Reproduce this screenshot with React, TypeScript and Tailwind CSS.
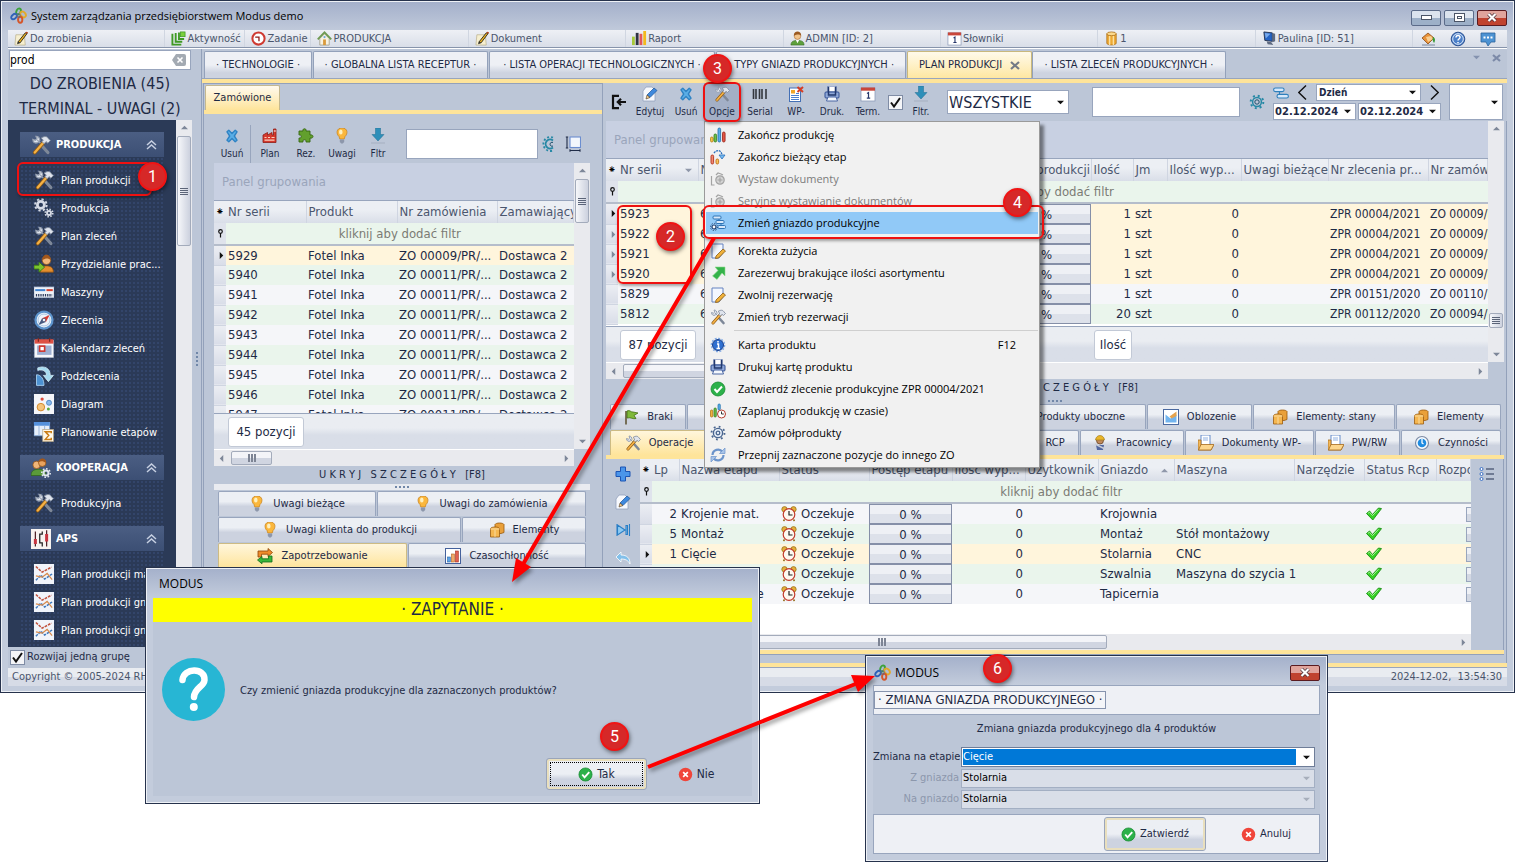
import React from 'react';

const ICONS: Record<string, React.ReactNode> = {
  logo: (
    <g fill="none" strokeWidth="1.8">
      <ellipse cx="8" cy="4.2" rx="2" ry="3" stroke="#3aa23a" transform="rotate(25 8 4.2)" />
      <ellipse cx="12.3" cy="7" rx="2.2" ry="3" stroke="#e2a92a" transform="rotate(-40 12.3 7)" />
      <ellipse cx="3.8" cy="9" rx="2" ry="3" stroke="#2f62b8" transform="rotate(50 3.8 9)" />
      <ellipse cx="9.6" cy="12" rx="2" ry="2.8" stroke="#d5562a" />
      <circle cx="8" cy="8" r="1.6" stroke="#5a6b86" strokeWidth="1" />
    </g>
  ),
  note: (
    <g>
      <path d="M2 4h9l1 11H1z" fill="#f6efd0" stroke="#b5ab86" strokeWidth=".7" />
      <path d="M4 12 12 2l2 .6L6.500 12.600z" fill="#f0b51c" stroke="#2c2a22" strokeWidth="1" />
      <path d="M12 1.800 13 .8l2 .6-1 1.600z" fill="#b8431d" />
      <path d="m4 12-.8 2 3-1z" fill="#222" />
    </g>
  ),
  stack: (
    <g fill="none" stroke="#3f9a24" strokeWidth="2">
      <path d="M1.500 3v11.500H11M5 2v9.500h7M8.500 1.500v7H14" />
      <rect x="10" y="1" width="5" height="5" fill="#7bcf3d" stroke="#3f9a24" strokeWidth=".8" />
    </g>
  ),
  clockRed: (
    <g>
      <circle cx="8" cy="8" r="6.500" fill="#fff" stroke="#cf3a31" strokeWidth="2.200" />
      <path d="M4.500 6.500H8.500V11" fill="none" stroke="#8d1d18" strokeWidth="1.400" />
    </g>
  ),
  house: (
    <g>
      <path d="M3 8v7h10V8L8 3z" fill="#f7f2e2" stroke="#9b9782" strokeWidth=".8" />
      <path d="M.8 9 8 1.500 15.200 9" fill="none" stroke="#6f9a52" strokeWidth="2" />
      <rect x="6.500" y="9" width="3" height="6" fill="#d99a3c" />
      <circle cx="8" cy="6.500" r="1.200" fill="#6aa7dc" />
    </g>
  ),
  bars: (
    <g>
      <rect x="0" y="6" width="3" height="9" fill="#a7c93a" />
      <rect x="4" y="2" width="3" height="13" fill="#2f3342" />
      <rect x="8" y="3" width="3" height="12" fill="#e2565a" />
      <rect x="12" y="0" width="3" height="15" fill="#f3b91d" />
    </g>
  ),
  user: (
    <g>
      <path d="M1 15c0-4 3-5 7-5s7 1 7 5z" fill="#5da03c" stroke="#376a20" strokeWidth=".6" />
      <path d="M6 9h4l-2 4z" fill="#fff" />
      <circle cx="8" cy="5.500" r="3.500" fill="#f2c48c" stroke="#a5682e" strokeWidth=".6" />
      <path d="M4 5c0-6 8-6 8 0-2-2-5-1-8 0z" fill="#9b5a22" />
    </g>
  ),
  calendar: (
    <g>
      <rect x="1" y="2" width="14" height="13" fill="#fff" stroke="#8d9bb8" strokeWidth=".8" />
      <rect x="1" y="1.500" width="14" height="3.200" fill="#c9463a" />
      <path d="M7 7.500 8.500 6.500V12M6.800 12.200h3.400" fill="none" stroke="#27376b" strokeWidth="1.200" />
    </g>
  ),
  db: (
    <g>
      <path d="M3 3v10c0 2.500 10 2.500 10 0V3z" fill="#eda934" stroke="#a96a12" strokeWidth=".8" />
      <path d="M6 4v11M10 4v11" stroke="#fbe0a0" strokeWidth="1.500" />
      <ellipse cx="8" cy="3" rx="5" ry="2" fill="#fbd98d" stroke="#a96a12" strokeWidth=".8" />
    </g>
  ),
  monitor: (
    <g>
      <path d="m2 1 9 1v9l-8-1z" fill="#2463c4" stroke="#2a3550" />
      <path d="m11 2 3 1v8l-3 1zM5 11l1 3 6 1-2-3z" fill="#5e6a80" />
      <path d="m3 2 6 1-5 5z" fill="#77a9ec" />
    </g>
  ),
  bucket: (
    <g>
      <path d="M2 7 8 2l6 5-6 6z" fill="#e8923a" stroke="#8a4c17" strokeWidth=".8" />
      <path d="m6 6 5-1 2 3-5 3z" fill="#f9cf91" />
      <path d="M13 6c3 1 2 5 1 6-1-2-2-3-1-6z" fill="#3a9a3a" />
      <path d="M2 14h13" stroke="#9aa4b6" strokeWidth="1.500" />
    </g>
  ),
  help: (
    <g>
      <circle cx="8" cy="8" r="6.800" fill="#4c80c9" stroke="#2c5191" />
      <circle cx="8" cy="8" r="5.300" fill="none" stroke="#dbe7f8" />
      <path d="M6 6.500c0-3 4.300-2.500 4 0C9.800 8 8 8 8 9.500M8 11v1.200" fill="none" stroke="#fff" strokeWidth="1.500" />
    </g>
  ),
  chat: (
    <g>
      <path d="M1 2h14v9h-4l-3 4-2-4H1z" fill="#4d93d3" stroke="#2b639c" strokeWidth=".8" />
      <path d="M3.500 6.500h2M7 6.500h2M10.500 6.500h2" stroke="#fff" strokeWidth="2" />
    </g>
  ),
  tools: (
    <g>
      <path d="m9 9 4.500 5" stroke="#7e8898" strokeWidth="2.600" strokeLinecap="round" />
      <path d="M9.500 8.500 5 4M1.500 3.500c0 2.500 2 3.500 4 2.500L7 4.500C7 2.500 6 1 4 1l.8 2L3.500 4.200z" fill="#dfe4ed" stroke="#97a1b2" strokeWidth="1" />
      <path d="M3 14 10 6" stroke="#8f5a15" strokeWidth="3" strokeLinecap="round" />
      <path d="M3 14 10 6" stroke="#f5b245" strokeWidth="1.800" strokeLinecap="round" />
      <path d="M8 2.500c3-2 5-1.500 6 .5l1.500 1.500-2 2-1.500-1.200L10.500 7 8.800 5.300l1-1.300z" fill="#dfe4ed" stroke="#7d889b" strokeWidth=".8" />
    </g>
  ),
  gears: (
    <g fill="none" stroke="#d6dbe6">
      <circle cx="5.500" cy="5.500" r="2.800" strokeWidth="2.200" />
      <circle cx="5.500" cy="5.500" r="4.600" strokeWidth="1.600" strokeDasharray="1.800 1.800" />
      <circle cx="12" cy="12" r="1.600" strokeWidth="1.500" />
      <circle cx="12" cy="12" r="3" strokeWidth="1.300" strokeDasharray="1.200 1.150" />
    </g>
  ),
  assign: (
    <g>
      <path d="M5 14.500c0-4 2-5 5-5s5.500 1 5.500 5z" fill="#e48e2f" stroke="#8f4f12" strokeWidth=".6" />
      <circle cx="10" cy="5" r="3.400" fill="#f0b679" stroke="#8f4f12" strokeWidth=".6" />
      <path d="M6.500 5c0-6 7-6 7 0-2-2-4-2-7 0z" fill="#a2571c" />
      <path d="M0 9h4V6.500L8.500 10.500 4 14.500V12H0z" fill="#7cc530" stroke="#3f7d12" strokeWidth=".7" />
    </g>
  ),
  ruler: (
    <g>
      <rect x="0" y="4" width="16" height="8.500" fill="#eef2f9" stroke="#aebbd2" strokeWidth=".6" />
      <path d="M1 6.500h8" stroke="#3f83d0" strokeWidth="1.600" />
      <path d="M10 6.500h5" stroke="#d8402f" strokeWidth="1.600" />
      <path d="M1.500 10.500h13" stroke="#2c3a5c" strokeWidth="2" strokeDasharray="1 .8" />
    </g>
  ),
  compass: (
    <g>
      <circle cx="8" cy="8" r="6.800" fill="#eef4fb" stroke="#5d94cc" strokeWidth="1.800" />
      <circle cx="8" cy="8" r="4.800" fill="none" stroke="#a9c5e2" strokeWidth=".8" />
      <path d="m3.500 12 3-5.500 3 3z" fill="#46597f" />
      <path d="m12.500 4-3 5.500-3-3z" fill="#d83a30" />
      <circle cx="8" cy="8" r="1.300" fill="#fff" stroke="#46597f" strokeWidth=".6" />
    </g>
  ),
  calendarRed: (
    <g>
      <rect x=".5" y="2" width="15" height="13.500" fill="#f5f7fb" stroke="#b8c1d2" strokeWidth=".6" />
      <rect x=".5" y="1" width="15" height="3.500" fill="#dd5145" />
      <rect x="2.500" y="6" width="11.500" height="7.500" fill="#9eb0d2" />
      <rect x="4.500" y="6.500" width="4" height="4" fill="#fff" stroke="#d0342b" strokeWidth="1.300" />
      <path d="M3.500 0v3M12.500 0v3" stroke="#7d2a22" strokeWidth="1" />
    </g>
  ),
  sub: (
    <g>
      <path d="M2 7c4 0 6 4 6 8.500H2z" fill="#4d92d2" stroke="#a9d1f0" strokeWidth=".7" />
      <path d="M3 1.500c5-2 10 0 10 6h2.500l-4 5-4-5H10C10 4 7 2.500 3 3.500z" fill="#a7dbf0" stroke="#d9f2fb" strokeWidth=".6" />
    </g>
  ),
  diagram: (
    <g>
      <rect width="16" height="16" fill="#f5f6fa" />
      <circle cx="5.500" cy="10.500" r="3" fill="#f6c57d" stroke="#d48a2c" strokeWidth=".8" />
      <circle cx="12" cy="7" r="2" fill="#8bbbec" stroke="#4c83c2" strokeWidth=".7" />
      <circle cx="6.500" cy="4" r="1.300" fill="#dc4c3d" />
      <circle cx="11.500" cy="12" r="1.200" fill="#5eaa3d" />
    </g>
  ),
  sigma: (
    <g>
      <rect x="0" y="0" width="12.500" height="11" fill="#e7effa" stroke="#7ea4d4" strokeWidth=".7" />
      <rect x="0" y="0" width="12.500" height="3" fill="#5591dc" />
      <path d="M4 3v8M8.500 3v8" stroke="#9bb7dc" strokeWidth=".8" />
      <rect x="7" y="6" width="8.500" height="9.500" fill="#fff8ea" stroke="#b9a98a" strokeWidth=".6" />
      <path d="M13.800 9V7.700H9l2.800 3L9 13.900h4.800v-1.300" fill="none" stroke="#cb7d16" strokeWidth="1.200" />
    </g>
  ),
  coop: (
    <g>
      <path d="M0 14c0-4 3-5 6-5s6 1 6 5z" fill="#5b9b3a" stroke="#32651b" strokeWidth=".6" />
      <circle cx="4.500" cy="5.500" r="3" fill="#f0b679" stroke="#8f4f12" strokeWidth=".6" />
      <circle cx="9" cy="3.800" r="3" fill="#e8a35f" stroke="#8f4f12" strokeWidth=".6" />
      <path d="M6 3.500c1-4.500 6-4 6 .5-2-1.500-4-2-6-.5z" fill="#a2571c" />
      <circle cx="12" cy="12" r="2" fill="none" stroke="#dfe5ee" strokeWidth="1.600" />
      <circle cx="12" cy="12" r="3.400" fill="none" stroke="#dfe5ee" strokeWidth="1.200" strokeDasharray="1.300 1.300" />
    </g>
  ),
  aps: (
    <g>
      <rect width="16" height="16" fill="#f8f3f0" />
      <path d="M3.500 2v12M12.500 1v13" stroke="#51242a" strokeWidth="1" />
      <rect x="2.300" y="8" width="2.400" height="4" fill="#c73540" />
      <path d="M9 2v2H7v7h2v3" fill="none" stroke="#222" strokeWidth="1" />
      <rect x="11.300" y="4" width="2.400" height="6" fill="#c73540" />
    </g>
  ),
  lines: (
    <g>
      <rect width="16" height="16" fill="#f1f4fa" />
      <path d="m1.500 2 5 4.500L14 2.500" fill="none" stroke="#c0523d" strokeWidth="1.200" strokeDasharray="2.200 .8" />
      <path d="m1.500 13 4-4 3 3 6-4" fill="none" stroke="#3f79bd" strokeWidth="1.200" strokeDasharray="2.200 .8" />
      <path d="m1.500 9.500 5 1 4-3 4 5" fill="none" stroke="#d78a4c" strokeWidth="1" />
    </g>
  ),
  cross: <path d="M3 3.800 4.800 2.200 8 5.400l3.200-3.200L13 3.800 10.300 8l2.700 4.200-1.800 1.600L8 10.600l-3.200 3.200L3 12.200 5.700 8z" fill="#5aaee6" stroke="#2f83c4" strokeWidth="1.400" strokeLinejoin="round" />,
  factory: (
    <g>
      <path d="M1 7 5.500 4.500V7L10 4.500V7h1.500V1H14v13.500H1z" fill="#d63a2e" stroke="#8e1d15" strokeWidth=".8" />
      <path d="M2.500 9.500h2M6 9.500h2M9.500 9.500h3M2.500 12.200h10" stroke="#fbd0bb" strokeWidth="1.200" />
      <path d="M11.800 3h2" stroke="#fff" />
    </g>
  ),
  puzzle: <path d="M1 3h4c-1-3 4-3 3 0h4v4c4-1 4 4 0 3v4H8c1-3-4-3-3 0H1v-4c3 1 3-4 0-3z" fill="#62a02d" stroke="#376812" strokeWidth=".9" />,
  bulb: (
    <g>
      <path d="M8 0c-6 0-6 6-3 8.500L5.800 11h4.400L11 8.500C14 6 14 0 8 0z" fill="#fbb73c" stroke="#c6801a" strokeWidth=".7" />
      <ellipse cx="6.800" cy="4" rx="1.800" ry="2.500" fill="#fff0bd" />
      <path d="M5.800 11.500h4.400v2.500L8.800 15.500H7.200L5.800 14z" fill="#8d97ab" />
    </g>
  ),
  down: (
    <g>
      <path d="M5.500 0h5v6.500H14L8 13 2 6.500h3.500z" fill="#2e8fb9" stroke="#1f6c92" strokeWidth=".5" />
      <path d="M1 15h14" stroke="#a5afc0" />
    </g>
  ),
  gearTeal: (
    <g fill="none" stroke="#2688a5">
      <circle cx="8" cy="8" r="4.400" strokeWidth="1.500" />
      <circle cx="8" cy="8" r="6.300" strokeWidth="2" strokeDasharray="2 2.950" />
      <circle cx="8" cy="8" r="2.200" stroke="#1c4f6c" strokeWidth="1" />
    </g>
  ),
  gearHalf: (
    <g fill="none" stroke="#2688a5">
      <path d="M12 4.500a4.500 4.500 0 1 0 0 7" strokeWidth="1.800" />
      <path d="M12 1.500a7 7 0 1 0 0 13" strokeWidth="1.800" strokeDasharray="2 2" />
      <path d="M12 6.500a2 2 0 1 0 0 3.500" stroke="#1c4f6c" />
    </g>
  ),
  resize: (
    <g fill="none" stroke="#202c47" strokeWidth="1.100">
      <rect x="5" y="1" width="10.500" height="10.500" fill="#f3f7fd" stroke="#6c8ed0" />
      <path d="M2 1v11M.8 1h2.400M.8 12h2.400M5 14.500h10M5 13.300v2.400M15 13.300v2.400" />
    </g>
  ),
  exit: <path d="M8 1.800H2v12.400h6M15 8H7M10 4.800 6.800 8l3.200 3.200" fill="none" stroke="#111" strokeWidth="2.200" />,
  edit: (
    <g>
      <path d="M4 1h6l3 3v11H1V5z" fill="#f7f9fd" stroke="#93a1bc" strokeWidth=".8" />
      <path d="m5 9 7-7 3 2.500-7 7z" fill="#3f89dd" stroke="#1d5398" strokeWidth=".7" />
      <path d="m5 9 3 2.500L4 13z" fill="#f1c98b" stroke="#4b3a25" strokeWidth=".6" />
    </g>
  ),
  barcode: <path d="M1.500 3v10M4 3v10M7.500 3v10M10 3v10M14 3v10" stroke="#33373f" strokeWidth="1.600" />,
  wp: (
    <g>
      <rect x="1.500" y="2" width="11" height="13.500" fill="#fff" stroke="#4470b5" />
      <rect x="3" y="4" width="4" height="3.500" fill="#f0a52a" />
      <path d="M3 9.500h8M3 11.500h8M3 13.500h8M8 7.500h3" stroke="#4c7fd0" />
      <path d="m9.500 1 5.500 5M15 1 9.500 6" stroke="#d63d23" strokeWidth="2" />
    </g>
  ),
  printer: (
    <g>
      <rect x="4" y="0" width="8" height="6" fill="#fff" stroke="#4a66a3" />
      <rect x="1" y="6" width="14" height="6" rx="1" fill="#8fa8d8" stroke="#304f93" />
      <path d="M4.500 1v8h7V1" fill="none" stroke="#22386e" strokeWidth="1.500" />
      <path d="M4 11h8l1.500 4h-11z" fill="#f3f7fd" stroke="#4a66a3" />
    </g>
  ),
  pills: (
    <g fill="#d7e8fa" stroke="#2f80bd" strokeWidth="1.100">
      <rect x=".6" y="3" width="10.500" height="3.600" rx="1.800" />
      <path d="M6.500 6.600v2.800" />
      <rect x="4" y="9.400" width="11.400" height="3.600" rx="1.800" />
    </g>
  ),
  barsColor: (
    <g strokeWidth=".8">
      <rect x=".5" y="10" width="2.600" height="5" rx="1.300" fill="#f5c34a" stroke="#b07b10" />
      <rect x="4" y="7" width="2.600" height="8" rx="1.300" fill="#6cc04a" stroke="#32791a" />
      <rect x="8" y="1" width="2.600" height="14" rx="1.300" fill="#57aee8" stroke="#1f6dab" />
      <rect x="12.500" y="5" width="2.600" height="10" rx="1.300" fill="#e05545" stroke="#98251b" />
    </g>
  ),
  stage: (
    <g>
      <rect x="1" y="6" width="2.600" height="9" rx="1.300" fill="#f08a70" stroke="#b0301f" strokeWidth=".9" />
      <rect x="6" y="10" width="2.600" height="5" rx="1.300" fill="#f7c860" stroke="#c26a14" strokeWidth=".9" />
      <path d="M4 4c3-4 8-3 8 3" fill="none" stroke="#2a6fbd" strokeWidth="1.400" strokeDasharray="2 .8" />
      <path d="M9 6h6l-3 4z" fill="#78bdf0" stroke="#2a6fbd" strokeWidth=".8" />
    </g>
  ),
  grayDoc: (
    <g fill="none" stroke="#a3a3a3" strokeWidth="1.200">
      <path d="M1.500 5v9h3" />
      <circle cx="10" cy="9" r="4.200" fill="#d4d4d4" />
      <path d="M10 6.500v5M7.500 9h5M6 4l2-2 3 1 2 1" />
    </g>
  ),
  change: (
    <g>
      <g fill="#d7e8fa" stroke="#2f74b5" strokeWidth="1">
        <rect x="3" y="1" width="8" height="3" rx="1" />
        <path d="M9 4v1.500" />
        <rect x="6" y="5.500" width="8" height="3" rx="1" />
        <path d="M11 8.500v2" />
        <rect x="8" y="10.500" width="7.500" height="3" rx="1" />
      </g>
      <circle cx="4" cy="12" r="2" fill="#fff" stroke="#23416f" strokeWidth="1.200" />
      <circle cx="4" cy="12" r="3.600" fill="none" stroke="#23416f" strokeWidth="1" strokeDasharray="1.200 1.600" />
    </g>
  ),
  notePencil: (
    <g>
      <path d="M2 1h11v9l-4 5H2z" fill="#f3f7fe" stroke="#6582c0" />
      <path d="m6 13 7-7 2.500 2-7 7-3 .5z" fill="#f0b13a" stroke="#8a5a10" strokeWidth=".8" />
    </g>
  ),
  greenArrow: <path d="M5 2h10v9l-3-3-5 6.500L2.500 11 8 5.500z" fill="#34b24a" stroke="#8edb8c" strokeWidth=".6" />,
  info: (
    <g>
      <circle cx="8" cy="8" r="5.500" fill="#2f6fd0" stroke="#173f8c" strokeWidth="1" />
      <circle cx="8" cy="8" r="6.700" fill="none" stroke="#7fa9e5" strokeWidth="1.200" strokeDasharray="2 1.500" />
      <path d="M8 4v1.500M7 7h1.500v4M6.500 11.500h3.500" fill="none" stroke="#fff" strokeWidth="1.500" />
    </g>
  ),
  ok: (
    <g>
      <circle cx="8" cy="8" r="7" fill="#2cb14a" stroke="#168a30" strokeWidth=".8" />
      <path d="m4.500 8 2.500 3 5-5.500" fill="none" stroke="#fff" strokeWidth="2" />
    </g>
  ),
  no: (
    <g>
      <circle cx="8" cy="8" r="7.200" fill="#f0453a" />
      <path d="m5.500 5.500 5 5m0-5-5 5" stroke="#fff" strokeWidth="1.800" />
    </g>
  ),
  barsClock: (
    <g>
      <rect x=".5" y="7" width="2.300" height="7" rx="1" fill="#f1b33f" stroke="#a86c0d" strokeWidth=".7" />
      <rect x="4" y="5" width="2.300" height="9" rx="1" fill="#69bb47" stroke="#32791a" strokeWidth=".7" />
      <rect x="8" y="1" width="2.300" height="6" rx="1" fill="#57aee8" stroke="#1f6dab" strokeWidth=".7" />
      <circle cx="11.500" cy="11" r="4" fill="#fff" stroke="#b3392c" />
      <path d="M11.500 8.500V11h2.300" fill="none" stroke="#333" />
    </g>
  ),
  gearBlue: (
    <g fill="none" stroke="#49658f">
      <circle cx="8" cy="8" r="4.600" strokeWidth="1.400" fill="#e8eff9" />
      <circle cx="8" cy="8" r="6.500" strokeWidth="1.800" strokeDasharray="1.800 3.300" />
      <circle cx="8" cy="8" r="1.800" strokeWidth="1.300" />
    </g>
  ),
  refresh: (
    <g fill="none" stroke="#6c94cb" strokeWidth="2.200">
      <path d="M2.500 8a5.500 5.500 0 0 1 10-3M13.500 8a5.500 5.500 0 0 1-10 3" />
      <path d="M15 1v5.500H9.500zM1 15V9.500h5.500z" fill="#a9c4e8" strokeWidth=".7" />
    </g>
  ),
  flag: (
    <g>
      <path d="M3 2v13.500" stroke="#594c2a" strokeWidth="1.500" />
      <path d="M4 2c3-1.500 4 1.500 6 1l5 1-4 2.500 2 3c-3 1-5-1.500-9-.5z" fill="#7fb93a" stroke="#436f13" strokeWidth=".8" />
    </g>
  ),
  load: (
    <g>
      <rect x=".5" y=".5" width="15" height="15" fill="#fff" stroke="#49689f" />
      <path d="M2.500 13.500v-8l5 4 6-4v8z" fill="#72b4ee" />
      <path d="m6.500 7.500 7-5v4.500l-5 2.500z" fill="#e6a34d" />
    </g>
  ),
  boxes: (
    <g fill="#e9a03a" stroke="#9a5a0e" strokeWidth=".8">
      <path d="M6 2.500c1-2 8-2 9 0v8l-3 1H6z" />
      <path d="M1.500 6.500c1-2 8-2 9 0V15h-9z" fill="#f5b751" />
      <path d="M1.500 7h9M6 8v7" stroke="#fde6b4" />
    </g>
  ),
  worker: (
    <g>
      <circle cx="8" cy="5.500" r="3.500" fill="#c08a5c" stroke="#5f3a1c" strokeWidth=".7" />
      <path d="M3.500 5C4-1 12-1 12.500 5z" fill="#e9b52a" stroke="#99700c" strokeWidth=".6" />
      <path d="M4 10h8l-1 5H5z" fill="#5267a0" />
      <path d="m3 9 10 5" stroke="#c9ced9" strokeWidth="1.500" />
    </g>
  ),
  folder: (
    <g>
      <rect x="3" y="0" width="9" height="11" fill="#fff" stroke="#5780c4" strokeWidth=".9" />
      <path d="M5 3h5M5 5h5" stroke="#8fb0e2" />
      <path d="M0 5h3v6h12l-2 4H0z" fill="#f3b95b" stroke="#a56a1c" strokeWidth=".8" />
      <path d="M3 9.500h13l-3 5.500H.5z" fill="#fcd68d" stroke="#a56a1c" strokeWidth=".8" />
    </g>
  ),
  clockBlue: (
    <g>
      <circle cx="8" cy="8" r="6.500" fill="#f7fafd" stroke="#7c8ba5" strokeWidth="1.200" />
      <circle cx="8" cy="8" r="4.300" fill="#1f8be0" />
      <path d="M8 4v4l1.500 1" fill="none" stroke="#fff" strokeWidth="1.300" />
    </g>
  ),
  plus: <path d="M5.500 1h5v4.500H15v5h-4.500V15h-5v-4.500H1v-5h4.500z" fill="#4a95ea" stroke="#1c55b4" strokeWidth="1" />,
  skip: <path d="M2 2v12M2.500 3l7.500 5-7.500 5zM11 3.500h1.500v9H11zM14.500 2v12" fill="#8ccaf2" stroke="#2a7fc6" strokeWidth="1.100" />,
  undo: <path d="M1 7 6 2v3c6 0 9 3 9 9-2-4-5-5-9-5v3z" fill="#83c0ea" stroke="#fff" strokeWidth=".8" />,
  alarm: (
    <g>
      <circle cx="3.500" cy="3.300" r="2.700" fill="#e2b13c" stroke="#936913" strokeWidth=".7" />
      <circle cx="12.500" cy="3.300" r="2.700" fill="#e2b13c" stroke="#936913" strokeWidth=".7" />
      <circle cx="8" cy="8.500" r="5.800" fill="#fdf9f0" stroke="#c23a2c" strokeWidth="1.200" />
      <path d="M8 5v4h3.500" fill="none" stroke="#222" strokeWidth="1.200" />
      <path d="m3.500 13.500-1 1.500M12.500 13.500l1 1.500" stroke="#936913" strokeWidth="1.500" />
    </g>
  ),
  tick: (
    <g>
      <path d="M.5 7.500 3.500 5l3 3.500L12.500 2l3 .6L6.800 14z" fill="#35d024" stroke="#1b8f14" strokeWidth=".9" />
      <path d="m2 7.300 1.500-1 3 3.200 6-6.200" fill="none" stroke="#a9f29c" strokeWidth="1" />
    </g>
  ),
  list: (
    <g>
      <path d="M7 3h8M7 8h8M7 13h8" stroke="#223052" strokeWidth="1.200" />
      <g fill="#fff" stroke="#3a6fc4">
        <circle cx="2.500" cy="3" r="1.500" />
        <circle cx="2.500" cy="8" r="1.500" />
        <circle cx="2.500" cy="13" r="1.500" />
      </g>
    </g>
  ),
  exchange: (
    <g>
      <path d="M1 9V3h10V.5l4.500 4L11 8.500V6.200H4.500V9z" fill="#ef8c2b" stroke="#8d4309" strokeWidth=".8" />
      <path d="M15 8v6H5v1.800L.5 12 5 8.500v2.300h6.500V8z" fill="#37b53a" stroke="#126b16" strokeWidth=".8" />
    </g>
  ),
  chart3: (
    <g>
      <rect x=".5" y=".5" width="15" height="15" fill="#fff" stroke="#44619c" />
      <rect x="2.500" y="9" width="2.800" height="5" fill="#5da3e6" stroke="#2a66a8" strokeWidth=".6" />
      <rect x="6.500" y="6" width="2.800" height="8" fill="#f0a868" stroke="#b1611b" strokeWidth=".6" />
      <rect x="10.500" y="3" width="2.800" height="11" fill="#e2604e" stroke="#a32a1b" strokeWidth=".6" />
    </g>
  ),
};

const Icon: React.FC<{ name: string; size?: number }> = ({ name, size = 16 }) => (
  <svg width={size} height={size} viewBox="0 0 16 16" className="shrink-0" aria-hidden="true">
    {ICONS[name]}
  </svg>
);

const Caret: React.FC<{ dir?: 'up' | 'down' | 'left' | 'right'; color?: string }> = ({ dir = 'down', color = '#7d8799' }) => {
  const paths = { up: 'M0 6h8L4 2z', down: 'M0 2h8L4 6z', left: 'M6 0v8L2 4z', right: 'M2 0v8l4-4z' };
  return (
    <svg width="7" height="7" viewBox="0 0 8 8" className="shrink-0" aria-hidden="true">
      <path d={paths[dir]} fill={color} />
    </svg>
  );
};

const Dots: React.FC = () => (
  <div className="flex gap-[2px]">
    {[0, 1, 2, 3].map((i) => (
      <span key={i} className="h-[2px] w-[2px] bg-[#7187a8]" />
    ))}
  </div>
);

const VScroll: React.FC<{ top: string; thumb: string }> = ({ top, thumb }) => (
  <div className="flex w-4 shrink-0 flex-col items-center justify-between bg-[#e9eaee] py-1">
    <Caret dir="up" />
    <div className={`flex w-full flex-1 flex-col px-px ${top}`}>
      <div className={`flex flex-col items-center justify-center gap-px rounded-[2px] border border-[#a3abbb] bg-gradient-to-r from-[#f6f7fa] to-[#ccd1de] ${thumb}`}>
        <span className="h-px w-2 bg-[#5b6478]" />
        <span className="h-px w-2 bg-[#5b6478]" />
        <span className="h-px w-2 bg-[#5b6478]" />
        <span className="h-px w-2 bg-[#5b6478]" />
      </div>
    </div>
    <Caret dir="down" />
  </div>
);

const HScroll: React.FC<{ thumb: string }> = ({ thumb }) => (
  <div className="flex h-[17px] shrink-0 items-center justify-between border-t border-white bg-[#e9eaee] px-1">
    <Caret dir="left" />
    <div className="flex h-full flex-1 py-px pl-[6px]">
      <div className={`flex items-center justify-center gap-px rounded-[2px] border border-[#a3abbb] bg-gradient-to-b from-[#f3f4f8] from-50% to-[#d0d5e1] to-50% ${thumb}`}>
        <span className="h-2 w-[2px] bg-[#7d8494]" />
        <span className="h-2 w-[2px] bg-[#7d8494]" />
        <span className="h-2 w-[2px] bg-[#7d8494]" />
      </div>
    </div>
    <Caret dir="right" />
  </div>
);

const MENU_BAR = [
  { icon: 'note', label: 'Do zrobienia', w: 'flex-1' },
  { icon: 'stack', label: 'Aktywność', w: 'w-20' },
  { icon: 'clockRed', label: 'Zadanie', w: 'w-[66px]' },
  { icon: 'house', label: 'PRODUKCJA', w: 'flex-1' },
  { icon: 'note', label: 'Dokument', w: 'flex-1' },
  { icon: 'bars', label: 'Raport', w: 'flex-1' },
  { icon: 'user', label: 'ADMIN [ID: 2]', w: 'flex-1' },
  { icon: 'calendar', label: 'Słowniki', w: 'flex-1' },
  { icon: 'db', label: '1', w: 'flex-1' },
  { icon: 'monitor', label: 'Paulina [ID: 51]', w: 'flex-1' },
];

const TitleBar: React.FC = () => (
  <header className="flex h-[29px] items-center gap-1 pl-[2px]">
    <Icon name="logo" size={17} />
    <h1 className="flex-1 pt-[2px] font-['Open_Sans',sans-serif] text-[11px] text-black">System zarządzania przedsiębiorstwem Modus demo</h1>
    <div className="flex gap-[3px] pt-1">
      <button aria-label="Minimalizuj" className="flex h-4 w-[30px] items-center justify-center rounded-[2px] border border-[#5b6b89] bg-gradient-to-b from-[#dbe3ee] from-50% to-[#9db0c8] to-50%">
        <span className="h-[5px] w-[11px] border border-[#4b5567] bg-white" />
      </button>
      <button aria-label="Przywróć" className="flex h-4 w-[30px] items-center justify-center rounded-[2px] border border-[#5b6b89] bg-gradient-to-b from-[#dbe3ee] from-50% to-[#9db0c8] to-50%">
        <span className="flex h-[9px] w-[11px] items-center justify-center border border-[#4b5567] bg-white">
          <span className="h-[3px] w-[5px] border border-[#4b5567]" />
        </span>
      </button>
      <CloseButton />
    </div>
  </header>
);

const CloseButton: React.FC = () => (
  <button aria-label="Zamknij" className="flex h-4 w-[30px] items-center justify-center rounded-[2px] border border-[#5a1b20] bg-gradient-to-b from-[#e0a49c] from-50% to-[#c0432f] to-50%">
    <svg width="10" height="9" viewBox="0 0 10 9" aria-hidden="true">
      <path d="m1.500 1 7 7m0-7-7 7" stroke="#4a3038" strokeWidth="3.600" />
      <path d="m1.500 1 7 7m0-7-7 7" stroke="#fff" strokeWidth="2.200" />
    </svg>
  </button>
);

const NAV = [
  {
    title: 'PRODUKCJA',
    icon: 'tools',
    items: [
      ['tools', 'Plan produkcji'],
      ['gears', 'Produkcja'],
      ['tools', 'Plan zleceń'],
      ['assign', 'Przydzielanie prac...'],
      ['ruler', 'Maszyny'],
      ['compass', 'Zlecenia'],
      ['calendarRed', 'Kalendarz zleceń'],
      ['sub', 'Podzlecenia'],
      ['diagram', 'Diagram'],
      ['sigma', 'Planowanie etapów'],
    ],
  },
  { title: 'KOOPERACJA', icon: 'coop', items: [['tools', 'Produkcyjna']] },
  {
    title: 'APS',
    icon: 'aps',
    items: [
      ['lines', 'Plan produkcji maszyn'],
      ['lines', 'Plan produkcji gniazd'],
      ['lines', 'Plan produkcji gniazd 2'],
    ],
  },
];

const Sidebar: React.FC = () => (
  <aside className="flex w-[184px] shrink-0 flex-col">
    <div className="m-px flex h-[20px] items-center border border-[#98a5bd] bg-white pr-1">
      <input aria-label="Szukaj" defaultValue="prod" className="min-w-0 flex-1 text-[12px] text-black outline-none" />
      <button aria-label="Wyczyść">
        <svg width="14" height="12" viewBox="0 0 14 12" aria-hidden="true">
          <path d="M0 6 4 0h8q2 0 2 2v8q0 2-2 2H4z" fill="#a3aab2" />
          <path d="m5.500 3.500 5 5m0-5-5 5" stroke="#fff" strokeWidth="1.600" />
        </svg>
      </button>
    </div>
    <a href="#todo" className="flex h-[25px] items-center justify-center text-[16px]">DO ZROBIENIA (45)</a>
    <a href="#terminal" className="flex h-[24px] items-center justify-center pt-px text-[16px]">TERMINAL - UWAGI (2)</a>
    <div className="flex flex-1">
      <nav className="min-w-0 flex-1 bg-[#2b3a57] px-3 pt-3">
        {NAV.map((group) => (
          <section key={group.title} className="group/section">
            <h2 className="flex h-[25px] items-center bg-gradient-to-b from-[#4b5e83] to-[#3c4f74] pl-[11px] pr-[7px] text-[11px] font-bold text-white">
              <Icon name={group.icon} size={20} />
              <span className="flex-1 pl-[5px] pt-[2px]">{group.title}</span>
              <svg width="11" height="10" viewBox="0 0 11 10" fill="none" stroke="#c7d0e2" strokeWidth="1.500" aria-hidden="true">
                <path d="m1 5 4.500-4L10 5M1 9l4.500-4L10 9" />
              </svg>
            </h2>
            <ul className="bg-[radial-gradient(#33456a_1px,transparent_1px)] bg-[length:4px_4px] py-[9px] group-last/section:pb-[3px]">
              {group.items.map(([icon, label], i) => (
                <li key={i}>
                  <a href="#modul" className="flex h-7 items-center gap-[7px] whitespace-nowrap pl-[14px] text-[11px] text-white">
                    <Icon name={icon} size={20} />
                    <span className="pt-[2px]">{label}</span>
                  </a>
                </li>
              ))}
            </ul>
          </section>
        ))}
      </nav>
      <VScroll top="pt-[5px]" thumb="h-[110px]" />
    </div>
    <label className="flex h-[21px] items-center gap-[2px] pl-[2px] text-[11px]">
      <CheckBox />
      Rozwijaj jedną grupę
    </label>
  </aside>
);

const CheckBox: React.FC<{ label?: string }> = ({ label }) => (
  <span className="relative inline-flex h-[15px] w-[15px] shrink-0">
    <input type="checkbox" defaultChecked aria-label={label} className="peer h-full w-full appearance-none border border-[#7f8ca5] bg-[#f4f5f8]" />
    <svg viewBox="0 0 15 15" className="pointer-events-none absolute inset-0 hidden peer-checked:block" aria-hidden="true">
      <path d="m3 7.500 3 4 6-8.500" fill="none" stroke="#111" strokeWidth="2" />
    </svg>
  </span>
);

const TABS = [
  { label: '· TECHNOLOGIE ·', w: 'w-[108px]' },
  { label: '· GLOBALNA LISTA RECEPTUR ·', w: 'w-[175px]' },
  { label: '· LISTA OPERACJI TECHNOLOGICZNYCH ·', w: 'w-[226px]' },
  { label: '· TYPY GNIAZD PRODUKCYJNYCH ·', w: 'w-[190px]' },
  { label: 'PLAN PRODUKCJI', w: 'w-[125px]', active: true },
  { label: '· LISTA ZLECEŃ PRODUKCYJNYCH ·', w: 'w-[194px]' },
];

const DocumentTabs: React.FC = () => (
  <div className="flex h-[30px] items-end border-b border-[#98a5bd] pl-[2px]">
    {TABS.map((tab) => (
      <button
        key={tab.label}
        className={`flex h-[27px] shrink-0 items-center justify-center gap-2 whitespace-nowrap rounded-t-[2px] border border-b-0 text-[11px] ${tab.w} ${
          tab.active ? 'border-[#c9b87c] bg-gradient-to-b from-[#fffaea] to-[#fee7a1]' : 'mr-px border-[#93a1ba] bg-gradient-to-b from-[#eef0f5] from-50% to-[#cdd3e0] to-80%'
        }`}
      >
        {tab.label}
        {tab.active && (
          <svg width="10" height="9" viewBox="0 0 10 9" aria-hidden="true">
            <path d="m1 1 8 7M9 1 1 8" stroke="#757b86" strokeWidth="2.200" />
          </svg>
        )}
      </button>
    ))}
    <div className="flex h-full flex-1 items-start justify-end gap-3 pr-[6px] pt-[5px]">
      <Caret color="#8492af" />
      <svg width="9" height="8" viewBox="0 0 9 8" aria-hidden="true">
        <path d="m1 1 7 6m0-6L1 7" stroke="#7c8aa8" strokeWidth="2.200" />
      </svg>
    </div>
  </div>
);

const ToolButton: React.FC<{ icon: string; label: string; active?: boolean }> = ({ icon, label, active }) => (
  <button className={`flex h-[38px] w-9 shrink-0 flex-col items-center gap-[2px] pt-[3px] text-[10px] ${active ? 'bg-[#a3afc6]' : ''}`}>
    <Icon name={icon} />
    {label}
  </button>
);

const GroupPanel: React.FC = () => (
  <div className="flex h-[38px] items-center border-b border-[#98a5bd] bg-[#c8d0e2] pl-2 text-[13px] text-[#9aa5bb]">Panel grupowania</div>
);

const Marker: React.FC<{ current?: boolean; dim?: boolean }> = ({ current, dim }) => (
  <td className="border-b border-[#cfd5e1] bg-gradient-to-b from-[#eceef3] to-[#d9dde8] p-0 pl-1">{(current || dim) && <Caret dir="right" color={current ? '#111' : '#7d8799'} />}</td>
);

// header row and "click to filter" row shared by every grid
const GridHead: React.FC<{ cols: string[]; sorted?: string; dir?: 'up' | 'down' }> = ({ cols, sorted, dir }) => (
  <thead className="text-[#4b566e]">
    <tr className="h-[22px] bg-gradient-to-b from-[#eceff4] from-40% to-[#d9dee8]">
      <th className="p-0 text-[11px] font-normal text-black">⁕</th>
      {cols.map((col) => (
        <th key={col} scope="col" className="overflow-hidden whitespace-nowrap border-r border-[#cfd5e1] p-0 pl-[2px] text-left font-normal">
          <span className="flex items-center justify-between">
            {col}
            {sorted === col && <span className="pr-[6px]"><Caret dir={dir} color="#8f98aa" /></span>}
          </span>
        </th>
      ))}
    </tr>
    <tr className="h-[22px] border-b-2 border-[#b5bdcb] bg-[#eaf5ec]">
      <td className="bg-[#dfe3ec] p-0">
        <svg width="7" height="9" viewBox="0 0 7 9" className="mx-auto" aria-hidden="true">
          <circle cx="3.500" cy="2.500" r="1.800" fill="none" stroke="#111" strokeWidth="1.200" />
          <path d="M3.500 4v4.500" stroke="#111" strokeWidth="1.200" />
        </svg>
      </td>
      <td colSpan={cols.length} className="p-0 text-center text-[#7b7b74]">kliknij aby dodać filtr</td>
    </tr>
  </thead>
);

const rowTone = (selected: boolean, i: number) => (selected ? 'bg-[#fff5dc]' : i % 2 ? 'bg-[#eaf5ec]' : 'bg-[#f5f6f9]');

const ORDERS = ['5929', '5940', '5941', '5942', '5943', '5944', '5945', '5946', '5947'];

const OrdersGrid: React.FC = () => (
  <div className="h-[212px] overflow-hidden bg-white">
    <table className="w-full table-fixed border-collapse text-[13px] leading-[18px]">
      <colgroup>
        <col className="w-3" />
        <col className="w-20" />
        <col className="w-[91px]" />
        <col className="w-[100px]" />
        <col />
      </colgroup>
      <GridHead cols={['Nr serii', 'Produkt', 'Nr zamówienia', 'Zamawiający']} />
      <tbody>
        {ORDERS.map((nr, i) => (
          <tr key={nr} className={`h-5 whitespace-nowrap ${rowTone(i === 0, i)}`}>
            <Marker current={i === 0} />
            <td className="p-0 pl-[2px]">{nr}</td>
            <td className="p-0 pl-[2px]">Fotel Inka</td>
            <td className="p-0 pl-[2px]">{i === 0 ? 'ZO 00009/PR/...' : 'ZO 00011/PR/...'}</td>
            <td className="p-0 pl-[2px]">Dostawca 2</td>
          </tr>
        ))}
      </tbody>
    </table>
  </div>
);

const DetailTab: React.FC<{ icon: string; label: string; active?: boolean; w: string }> = ({ icon, label, active, w }) => (
  <button
    className={`flex h-[25px] items-center justify-center gap-2 overflow-hidden whitespace-nowrap rounded-t-[2px] border border-b-0 text-[11px] ${w} ${
      active ? 'border-[#cdbb84] bg-gradient-to-b from-[#fff6dc] to-[#fee49a]' : 'border-[#98a5bd] bg-gradient-to-b from-[#eceff4] from-40% to-[#ccd2df] to-60%'
    }`}
  >
    <Icon name={icon} />
    {label}
  </button>
);

const OrdersPanel: React.FC = () => (
  <section className="flex w-[400px] shrink-0 flex-col border-x border-t border-[#93a1ba]">
    <div className="flex h-[30px] items-end border-b-4 border-[#fee49a] pl-px">
      <button className="h-[25px] w-[75px] rounded-t-[2px] border border-b-0 border-[#c4b88f] bg-gradient-to-b from-[#fffaee] to-[#fee49a] text-[11px]">Zamówione</button>
    </div>
    <div className="flex flex-col pl-[10px] pr-3">
      <div className="flex h-[49px] items-end">
        <div className="mr-px border-r border-[#98a5bd]">
          <ToolButton icon="cross" label="Usuń" />
        </div>
        <ToolButton icon="factory" label="Plan" />
        <ToolButton icon="puzzle" label="Rez." />
        <ToolButton icon="bulb" label="Uwagi" />
        <ToolButton icon="down" label="Fltr" />
        <input aria-label="Filtr zamówień" className="mb-1 ml-[10px] h-[30px] w-[132px] border border-[#98a5bd] bg-white px-1 text-[12px]" />
        <span className="mb-1 flex h-[30px] items-center gap-2 pl-[3px]">
          <Icon name="gearHalf" />
          <Icon name="resize" />
        </span>
      </div>
      <div className="flex">
        <div className="min-w-0 flex-1">
          <GroupPanel />
          <OrdersGrid />
          <div className="flex h-9 items-center border-t border-[#98a5bd] bg-gradient-to-b from-[#eaedf2] from-40% to-[#d9dee8] to-60% pl-[14px]">
            <span className="flex h-[30px] w-[76px] items-center justify-center rounded-[3px] border border-[#c2c9d6] bg-white text-[13px]">45 pozycji</span>
          </div>
        </div>
        <VScroll top="pt-[5px]" thumb="h-[44px]" />
      </div>
      <div className="mr-4">
        <HScroll thumb="w-[41px]" />
      </div>
      <button className="h-[18px] whitespace-pre text-[11px]">U K R Y J   S Z C Z E G Ó Ł Y   [F8]</button>
      <div className="flex h-[6px] items-center justify-center bg-[#e9ebf0]"><Dots /></div>
      <div className="flex flex-col gap-px px-1 pt-px">
        <div className="flex gap-px">
          <DetailTab icon="bulb" label="Uwagi bieżące" w="w-[158px]" />
          <DetailTab icon="bulb" label="Uwagi do zamówienia" w="flex-1" />
        </div>
        <div className="flex gap-px">
          <DetailTab icon="bulb" label="Uwagi klienta do produkcji" w="w-[243px]" />
          <DetailTab icon="boxes" label="Elementy" w="flex-1" />
        </div>
        <div className="flex gap-px">
          <DetailTab icon="exchange" label="Zapotrzebowanie" w="w-[189px]" active />
          <DetailTab icon="chart3" label="Czasochłonność" w="flex-1" />
        </div>
      </div>
    </div>
  </section>
);

const MENU: ({ icon: string; label: string; off?: boolean; on?: boolean; hint?: string } | 'line' | 'gap')[] = [
  { icon: 'barsColor', label: 'Zakończ produkcję' },
  { icon: 'stage', label: 'Zakończ bieżący etap' },
  { icon: 'grayDoc', label: 'Wystaw dokumenty', off: true },
  { icon: 'grayDoc', label: 'Seryjne wystawianie dokumentów', off: true },
  { icon: 'change', label: 'Zmień gniazdo produkcyjne', on: true },
  'gap',
  { icon: 'notePencil', label: 'Korekta zużycia' },
  { icon: 'greenArrow', label: 'Zarezerwuj brakujące ilości asortymentu' },
  { icon: 'notePencil', label: 'Zwolnij rezerwację' },
  { icon: 'tools', label: 'Zmień tryb rezerwacji' },
  'line',
  { icon: 'info', label: 'Karta produktu', hint: 'F12' },
  { icon: 'printer', label: 'Drukuj kartę produktu' },
  { icon: 'ok', label: 'Zatwierdź zlecenie produkcyjne ZPR 00004/2021' },
  { icon: 'barsClock', label: '(Zaplanuj produkcję w czasie)' },
  { icon: 'gearBlue', label: 'Zamów półprodukty' },
  { icon: 'refresh', label: 'Przepnij zaznaczone pozycje do innego ZO' },
];

const OptionsMenu: React.FC = () => (
  <div role="menu" className="absolute left-0 top-full z-20 w-[336px] border border-[#9a9a9a] bg-[#f1f1f1] p-px pt-[2px] font-['Open_Sans',sans-serif] text-[11px] text-black shadow-[4px_4px_3px_rgba(0,0,0,0.45)]">
    {MENU.map((item, i) => {
      if (item === 'gap') return <div key={i} className="h-[6px]" />;
      if (item === 'line') return <div key={i} className="mb-[3px] ml-7 mt-[2px] h-px bg-[#cfcfcf]" />;
      return (
        <button
          key={i}
          role="menuitem"
          disabled={item.off}
          className={`flex h-[22px] w-full items-center gap-3 whitespace-nowrap pl-1 pr-[22px] text-left ${item.off ? 'text-[#7c7c7c]' : ''} ${item.on ? 'bg-[#91c9f7]' : ''}`}
        >
          <Icon name={item.icon} />
          <span className="flex-1">{item.label}</span>
          {item.hint}
        </button>
      );
    })}
  </div>
);

const Combo: React.FC<{ label: string; value: string; box: string; id?: string; disabled?: boolean; inner?: string }> = ({ label, value, box, id, disabled, inner = '' }) => (
  <span className={`relative flex border bg-white ${box}`}>
    <select id={id} aria-label={id ? undefined : label} disabled={disabled} className={`w-full appearance-none outline-none ${inner}`}>
      <option>{value}</option>
    </select>
    <span className="pointer-events-none absolute inset-y-0 right-1 flex items-center">
      <Caret color={disabled ? '#a7aebb' : '#111'} />
    </span>
  </span>
);

const PlanToolbar: React.FC = () => (
  <div className="flex h-[38px] items-start pl-[2px]">
    <div className="flex h-full w-6 items-center justify-center">
      <Icon name="exit" />
    </div>
    <div className="flex pl-px">
      <ToolButton icon="edit" label="Edytuj" />
      <ToolButton icon="cross" label="Usuń" />
      <div className="relative">
        <ToolButton icon="tools" label="Opcje" active />
        <OptionsMenu />
      </div>
      <div className="flex pl-[2px]">
        <ToolButton icon="barcode" label="Serial" />
        <ToolButton icon="wp" label="WP-" />
        <ToolButton icon="printer" label="Druk." />
        <ToolButton icon="calendar" label="Term." />
      </div>
    </div>
    <div className="flex h-full items-center pl-[2px]">
      <CheckBox label="Tylko aktywne" />
    </div>
    <ToolButton icon="down" label="Fltr." />
    <Combo label="Zakres" value="WSZYSTKIE" box="ml-2 mt-[7px] h-6 w-[122px] border-[#98a5bd] text-[16px]" inner="pl-px" />
    <input aria-label="Szukaj w planie" className="ml-[23px] mt-1 h-[30px] w-[148px] border border-[#98a5bd] bg-white px-1 text-[12px]" />
    <div className="flex h-full items-center pl-[9px]">
      <Icon name="gearTeal" />
    </div>
    <div className="ml-2 flex w-[168px] shrink-0 flex-col gap-[2px] pt-px font-bold">
      <div className="flex items-center justify-between">
        <Icon name="pills" />
        <button aria-label="Poprzedni">
          <svg width="9" height="15" viewBox="0 0 9 15" fill="none" stroke="#111" strokeWidth="1.400" aria-hidden="true"><path d="M8 .5.8 7.500 8 14.500" /></svg>
        </button>
        <Combo label="Okres" value="Dzień" box="h-[17px] w-[105px] border-[#98a5bd] text-[10px]" inner="pl-[2px]" />
        <button aria-label="Następny" className="pr-[2px]">
          <svg width="9" height="15" viewBox="0 0 9 15" fill="none" stroke="#111" strokeWidth="1.400" aria-hidden="true"><path d="m1 .5 7.200 7L1 14.500" /></svg>
        </button>
      </div>
      <div className="flex gap-[2px] font-['DejaVu_Sans',sans-serif] text-[10px]">
        <Combo label="Od" value="02.12.2024" box="h-[17px] w-[83px] border-[#98a5bd]" inner="pl-px" />
        <Combo label="Do" value="02.12.2024" box="h-[17px] w-[83px] border-[#98a5bd]" inner="pl-px" />
      </div>
    </div>
    <div className="flex flex-1 justify-end pr-1 pt-px">
      <Combo label="Widok" value="" box="h-9 w-[54px] border-[#98a5bd]" />
    </div>
  </div>
);

const PLAN = [
  { nr: '5923', qty: 1, zpr: 'ZPR 00004/2021', zo: 'ZO 00009/PR/2021', sel: true },
  { nr: '5922', qty: 1, zpr: 'ZPR 00004/2021', zo: 'ZO 00009/PR/2021', sel: true },
  { nr: '5921', qty: 1, zpr: 'ZPR 00004/2021', zo: 'ZO 00009/PR/2021', sel: true },
  { nr: '5920', qty: 1, zpr: 'ZPR 00004/2021', zo: 'ZO 00009/PR/2021', sel: true },
  { nr: '5829', qty: 1, zpr: 'ZPR 00151/2020', zo: 'ZO 00110/PR/2020', sel: false },
  { nr: '5812', qty: 20, zpr: 'ZPR 00112/2020', zo: 'ZO 00094/PR/2020', sel: false },
];

const Percent: React.FC = () => (
  <td className="p-0">
    <button className="block h-5 w-full border border-[#858fa8] bg-gradient-to-b from-[#eef0f5] from-50% to-[#dde1ea] to-50% leading-none">0 %</button>
  </td>
);

const PlanGrid: React.FC = () => (
  <div className="h-[167px] overflow-hidden bg-white">
    <table className="w-full table-fixed border-collapse text-[13px] leading-[18px]">
      <colgroup>
        <col className="w-3" />
        <col className="w-20" />
        <col className="w-[293px]" />
        <col className="w-[100px]" />
        <col className="w-[42px]" />
        <col className="w-[34px]" />
        <col className="w-[74px]" />
        <col className="w-[87px]" />
        <col className="w-[100px]" />
        <col />
      </colgroup>
      <GridHead cols={['Nr serii', 'Nazwa', 'Postęp produkcji', 'Ilość', 'Jm', 'Ilość wyp...', 'Uwagi bieżące', 'Nr zlecenia pr...', 'Nr zamów']} sorted="Nr serii" dir="down" />
      <tbody>
        {PLAN.map((row, i) => (
          <tr key={row.nr} className={`h-5 overflow-hidden whitespace-nowrap ${rowTone(row.sel, i)}`}>
            <Marker current={i === 0} dim={row.sel} />
            <td className="p-0 pl-[2px]">{row.nr}</td>
            <td className="p-0 pl-[2px]">6</td>
            <Percent />
            <td className="p-0 pr-[2px] text-right">{row.qty}</td>
            <td className="p-0 pl-[2px]">szt</td>
            <td className="p-0 pr-[2px] text-right">0</td>
            <td className="p-0" />
            <td className="p-0 pl-[2px] text-[12px]">{row.zpr}</td>
            <td className="overflow-hidden p-0 pl-[2px] text-[12px]">{row.zo}</td>
          </tr>
        ))}
      </tbody>
    </table>
  </div>
);

const STAGES = [
  { lp: 2, name: 'Krojenie mat.', nest: 'Krojownia', machine: '' },
  { lp: 5, name: 'Montaż', nest: 'Montaż', machine: 'Stół montażowy' },
  { lp: 1, name: 'Cięcie', nest: 'Stolarnia', machine: 'CNC', sel: true },
  { lp: 3, name: 'Szycie', nest: 'Szwalnia', machine: 'Maszyna do szycia 1' },
  { lp: 4, name: 'Tapicerowanie', nest: 'Tapicernia', machine: '' },
];

const StagesGrid: React.FC = () => (
  <div className="flex-1 overflow-hidden bg-white">
    <table className="w-full table-fixed border-collapse text-[13px] leading-[18px]">
      <colgroup>
        <col className="w-3" />
        <col className="w-[27px]" />
        <col className="w-[100px]" />
        <col className="w-[90px]" />
        <col className="w-[83px]" />
        <col className="w-[73px]" />
        <col className="w-[73px]" />
        <col className="w-[76px]" />
        <col className="w-[120px]" />
        <col className="w-[70px]" />
        <col className="w-[72px]" />
        <col />
      </colgroup>
      <GridHead
        cols={['Lp', 'Nazwa etapu', 'Status', 'Postęp etapu', 'Ilość wyp...', 'Użytkownik', 'Gniazdo', 'Maszyna', 'Narzędzie', 'Status Rcp', 'Rozpoczęcie']}
        sorted="Gniazdo"
        dir="up"
      />
      <tbody>
        {STAGES.map((row, i) => (
          <tr key={row.lp} className={`h-5 whitespace-nowrap ${rowTone(!!row.sel, i)}`}>
            <Marker current={row.sel} />
            <td className="p-0 pr-[2px] text-right">{row.lp}</td>
            <td className="p-0 pl-[2px]">{row.name}</td>
            <td className="p-0 pl-[2px]">
              <span className="flex items-center gap-1">
                <Icon name="alarm" />
                Oczekuje
              </span>
            </td>
            <Percent />
            <td className="p-0 pr-[2px] text-right">0</td>
            <td className="p-0" />
            <td className="p-0 pl-[2px]">{row.nest}</td>
            <td className="p-0 pl-[2px]">{row.machine}</td>
            <td className="p-0" />
            <td className="p-0 pl-[2px]"><Icon name="tick" /></td>
            <td className="p-0 pl-[30px]">
              <button aria-label="Rozpocznij" className="block h-[15px] w-full border border-r-0 border-[#98a5bd] bg-gradient-to-b from-[#eef0f5] from-50% to-[#d3d8e3] to-50%" />
            </td>
          </tr>
        ))}
      </tbody>
    </table>
  </div>
);

const PlanPanel: React.FC = () => (
  <section className="ml-[2px] flex min-w-0 flex-1 flex-col">
    <PlanToolbar />
    <div className="flex flex-1 flex-col border-r border-[#93a1ba] pl-px pr-[2px]">
      <div className="flex">
        <div className="min-w-0 flex-1">
          <GroupPanel />
          <PlanGrid />
          <div className="flex h-9 items-center border-t border-[#98a5bd] bg-gradient-to-b from-[#eaedf2] from-40% to-[#d9dee8] to-60% pl-[14px] text-[13px]">
            <span className="flex h-[30px] w-[76px] items-center justify-center rounded-[3px] border border-[#c2c9d6] bg-white">87 pozycji</span>
            <span className="ml-[398px] flex h-[30px] w-[38px] items-center justify-center rounded-[3px] border border-[#c2c9d6] bg-white">Ilość</span>
          </div>
        </div>
        <VScroll top="justify-end pb-[23px]" thumb="h-[15px]" />
      </div>
      <div className="mr-4">
        <HScroll thumb="w-[380px]" />
      </div>
      <button className="h-[18px] whitespace-pre text-[11px]">U K R Y J   S Z C Z E G Ó Ł Y   [F8]</button>
      <div className="flex h-[7px] items-center justify-center"><Dots /></div>
      <div className="flex flex-col gap-px pl-1 pr-[3px]">
        <div className="flex gap-px">
          <DetailTab icon="flag" label="Braki" w="w-[76px]" />
          <DetailTab icon="boxes" label="" w="w-[304px]" />
          <DetailTab icon="boxes" label="Produkty uboczne" w="flex-1" />
          <DetailTab icon="load" label="Oblozenie" w="w-[105px]" />
          <DetailTab icon="boxes" label="Elementy: stany" w="w-[142px]" />
          <DetailTab icon="boxes" label="Elementy" w="w-[105px]" />
        </div>
        <div className="flex gap-px">
          <DetailTab icon="tools" label="Operacje" w="w-[98px]" active />
          <DetailTab icon="boxes" label="" w="w-[297px]" />
          <DetailTab icon="clockRed" label="RCP" w="flex-1" />
          <DetailTab icon="worker" label="Pracownicy" w="w-[104px]" />
          <DetailTab icon="folder" label="Dokumenty WP-" w="w-[129px]" />
          <DetailTab icon="folder" label="PW/RW" w="w-[85px]" />
          <DetailTab icon="clockBlue" label="Czynności" w="w-[100px]" />
        </div>
      </div>
      <div className="flex flex-1 border-y-4 border-[#fee49a]">
        <div className="flex w-[34px] shrink-0 flex-col items-center gap-3 pt-[7px]">
          <Icon name="plus" />
          <Icon name="edit" />
          <Icon name="skip" />
          <Icon name="undo" />
        </div>
        <div className="flex min-w-0 flex-1 flex-col">
          <StagesGrid />
          <HScroll thumb="w-[450px]" />
        </div>
        <div className="flex w-[33px] shrink-0 justify-center border-r border-[#93a1ba] pt-[7px]">
          <Icon name="list" />
        </div>
      </div>
      <div className="h-[9px] shrink-0 border-t border-[#93a1ba]" />
    </div>
  </section>
);

const QuestionDialog: React.FC = () => (
  <div role="dialog" aria-label="MODUS" className="absolute left-[145px] top-[567px] z-30 w-[615px] border border-[#26324c] bg-[#c3ccdc] px-[7px] pb-[7px] shadow-[inset_0_0_0_1px_#eef1f6]">
    <div className="-mx-[6px] mt-px flex h-[29px] items-center bg-gradient-to-b from-[#a5b1cb] to-[#c3ccdc] pl-3 font-['Open_Sans',sans-serif] text-[12px] text-black">MODUS</div>
    <div className="bg-[#bcc6d7]">
      <h2 className="flex h-6 items-center justify-center bg-[#ffff00] text-[17px]">· ZAPYTANIE ·</h2>
      <div className="flex items-center gap-[15px] pl-[9px] pt-9">
        <svg width="63" height="63" viewBox="0 0 63 63" className="shrink-0" aria-hidden="true">
          <circle cx="31.500" cy="31.500" r="31.500" fill="#27b6d4" />
          <path d="M20.500 22c1-13 23-12.500 22 0-.5 7-10 7.500-10.500 17" fill="none" stroke="#fff" strokeWidth="6.500" strokeLinecap="round" />
          <circle cx="31.800" cy="49" r="4" fill="#fff" />
        </svg>
        <p className="pt-1 text-[11px]">Czy zmienić gniazda produkcyjne dla zaznaczonych produktów?</p>
      </div>
      <div className="flex justify-end gap-4 pb-[7px] pr-[22px] pt-[38px] text-[12px]">
        <button className="h-[30px] w-[99px] rounded-[2px] border-2 border-[#e9dfbd] bg-gradient-to-b from-[#eceff4] from-50% to-[#cdd3e0] to-70% p-px outline outline-1 outline-[#9aa5ba]">
          <span className="flex h-full items-center justify-center gap-1 border border-dotted border-black">
            <Icon name="ok" size={15} />
            Tak
          </span>
        </button>
        <button className="flex h-[30px] w-[68px] items-center justify-center gap-1">
          <Icon name="no" size={15} />
          Nie
        </button>
      </div>
    </div>
  </div>
);

const ChangeDialog: React.FC = () => (
  <div role="dialog" aria-label="Zmiana gniazda" className="absolute left-[865px] top-[655px] z-30 w-[463px] border border-[#26324c] bg-[#c3ccdc] px-[7px] pb-[7px] shadow-[inset_0_0_0_1px_#eef1f6]">
    <div className="-mx-[6px] mt-px flex h-[28px] items-center gap-1 bg-gradient-to-b from-[#a5b1cb] to-[#c3ccdc] pl-[7px] pr-[6px] pt-[3px] font-['Open_Sans',sans-serif] text-[12px] text-black">
      <Icon name="logo" size={17} />
      <span className="flex-1">MODUS</span>
      <CloseButton />
    </div>
    <div className="flex h-[30px] items-center border border-[#98a5bd] bg-[#eef0f5]">
      <h2 className="flex h-[18px] items-center border border-[#8794ae] bg-[#f4f5f8] px-[3px] text-[13px]">· ZMIANA GNIAZDA PRODUKCYJNEGO ·</h2>
    </div>
    <div className="bg-[#bcc6d7] pb-[5px] text-[11px]">
      <p className="flex h-8 items-center justify-center pb-1">Zmiana gniazda produkcyjnego dla 4 produktów</p>
      <div className="grid grid-cols-[86px_1fr] items-center gap-x-[2px] gap-y-[2px] pr-[5px]">
        <label htmlFor="stage" className="whitespace-nowrap text-right">Zmiana na etapie</label>
        <Combo id="stage" label="" value="Cięcie" box="h-5 border-[#6f7d98] p-px pr-[18px]" inner="bg-[#0078d7] text-white outline-1 outline-dotted -outline-offset-1 outline-[#f7a34a]" />
        <label htmlFor="from" className="text-right text-[#8c97ac]">Z gniazda</label>
        <Combo id="from" label="" value="Stolarnia" disabled box="h-[19px] border-[#a3afc3] bg-[#d9dee8]" inner="bg-[#d9dee8] pl-px text-black opacity-100" />
        <label htmlFor="to" className="text-right text-[#8c97ac]">Na gniazdo</label>
        <Combo id="to" label="" value="Stolarnia" disabled box="h-[19px] border-[#a3afc3] bg-[#d9dee8]" inner="bg-[#d9dee8] pl-px text-black opacity-100" />
      </div>
    </div>
    <div className="flex h-10 items-center justify-end gap-4 border border-[#98a5bd] bg-[#eef0f5] pr-2 text-[11px]">
      <button className="flex h-8 w-[100px] items-center justify-center gap-1 rounded-[2px] border-2 border-[#e9dfbd] bg-gradient-to-b from-[#eceff4] from-50% to-[#cdd3e0] to-70% outline outline-1 outline-[#9aa5ba]">
        <Icon name="ok" size={15} />
        Zatwierdź
      </button>
      <button className="flex h-8 w-[90px] items-center justify-center gap-1">
        <Icon name="no" size={15} />
        Anuluj
      </button>
    </div>
  </div>
);

const BADGES = [
  { n: 1, pos: 'left-[138px] top-[162px]' },
  { n: 2, pos: 'left-[656px] top-[222px]' },
  { n: 3, pos: 'left-[703px] top-[54px]' },
  { n: 4, pos: 'left-[1003px] top-[188px]' },
  { n: 5, pos: 'left-[600px] top-[722px]' },
  { n: 6, pos: 'left-[983px] top-[654px]' },
];

const FRAMES = [
  'left-[17px] top-[162px] w-[135px] h-[34px]',
  'left-[617px] top-[205px] w-[75px] h-[79px]',
  'left-[703px] top-[82px] w-[38px] h-[40px]',
  'left-[703px] top-[205px] w-[341px] h-[34px]',
];

// numbered steps drawn over the application
const Annotations: React.FC = () => (
  <div className="pointer-events-none absolute inset-0 z-40">
    {FRAMES.map((frame) => (
      <div key={frame} className={`absolute rounded-[6px] border-2 border-[#ee1111] shadow-[1px_2px_3px_rgba(0,0,0,0.35)] ${frame}`} />
    ))}
    <svg className="absolute left-0 top-0 drop-shadow-[2px_3px_2px_rgba(0,0,0,0.4)]" width="900" height="800" viewBox="0 0 900 800" aria-hidden="true">
      <g stroke="#fe0000" strokeWidth="4">
        <path d="M714 238 522 566M648 767 858 683" fill="none" />
      </g>
      <path d="m512 582 4-24 15 9zM875 676l-17 16-7-17z" fill="#fe0000" />
    </svg>
    {BADGES.map(({ n, pos }) => (
      <span
        key={n}
        className={`absolute flex h-[29px] w-[29px] items-center justify-center rounded-full border-2 border-[#f01414] bg-[#d62828] font-['Roboto',sans-serif] text-[16px] text-white shadow-[1px_2px_4px_rgba(0,0,0,0.5)] ${pos}`}
      >
        {n}
      </span>
    ))}
  </div>
);

const App: React.FC = () => (
  <div className="relative min-h-screen overflow-hidden bg-white font-['DejaVu_Sans_Condensed','Noto_Sans',sans-serif] text-[#1e2a45]">
    <div className="border border-[#26324c] bg-[#c3ccdc] bg-gradient-to-b from-[#a3afca] to-[#c3ccdc] to-[32px] px-[7px] pb-[6px] shadow-[inset_0_0_0_1px_#eef1f6]">
      <TitleBar />
      <div className="flex h-[18px] items-center border-b border-[#8794ab] bg-gradient-to-b from-[#eef0f5] to-[#d9dee8] text-[11px] text-[#4a556c]">
        {MENU_BAR.map((item) => (
          <button key={item.label} className={`flex h-full items-center gap-px whitespace-nowrap border-r border-[#d0d6e1] pl-[6px] ${item.w}`}>
            <Icon name={item.icon} size={15} />
            <span className="pt-px">{item.label}</span>
          </button>
        ))}
        {['bucket', 'help', 'chat'].map((name) => (
          <button key={name} aria-label={name} className="flex w-[30px] justify-center">
            <Icon name={name} />
          </button>
        ))}
        <span className="w-1" />
      </div>
      <div className="flex border-t border-white bg-[#bcc6d7]">
        <Sidebar />
        <div className="flex w-[9px] items-center justify-center">
          <span className="rotate-90"><Dots /></span>
        </div>
        <main className="flex min-w-0 flex-1 flex-col border-l border-[#93a1ba]">
          <DocumentTabs />
          <div className="h-1 bg-[#fee49a]" />
          <div className="flex flex-1 pl-px">
            <OrdersPanel />
            <PlanPanel />
          </div>
          <div className="h-[5px] border-b border-[#98a5bd] bg-[#fee49a]" />
        </main>
      </div>
      <footer className="flex h-[18px] items-center justify-between bg-gradient-to-b from-[#e9ecf1] from-50% to-[#d6dbe6] to-50% pl-1 pr-[5px] text-[11px] text-[#4a556c]">
        <span>Copyright © 2005-2024 RH Systemy</span>
        <span className="whitespace-pre">2024-12-02,  13:54:30</span>
      </footer>
    </div>
    <QuestionDialog />
    <ChangeDialog />
    <Annotations />
  </div>
);

export default App;
